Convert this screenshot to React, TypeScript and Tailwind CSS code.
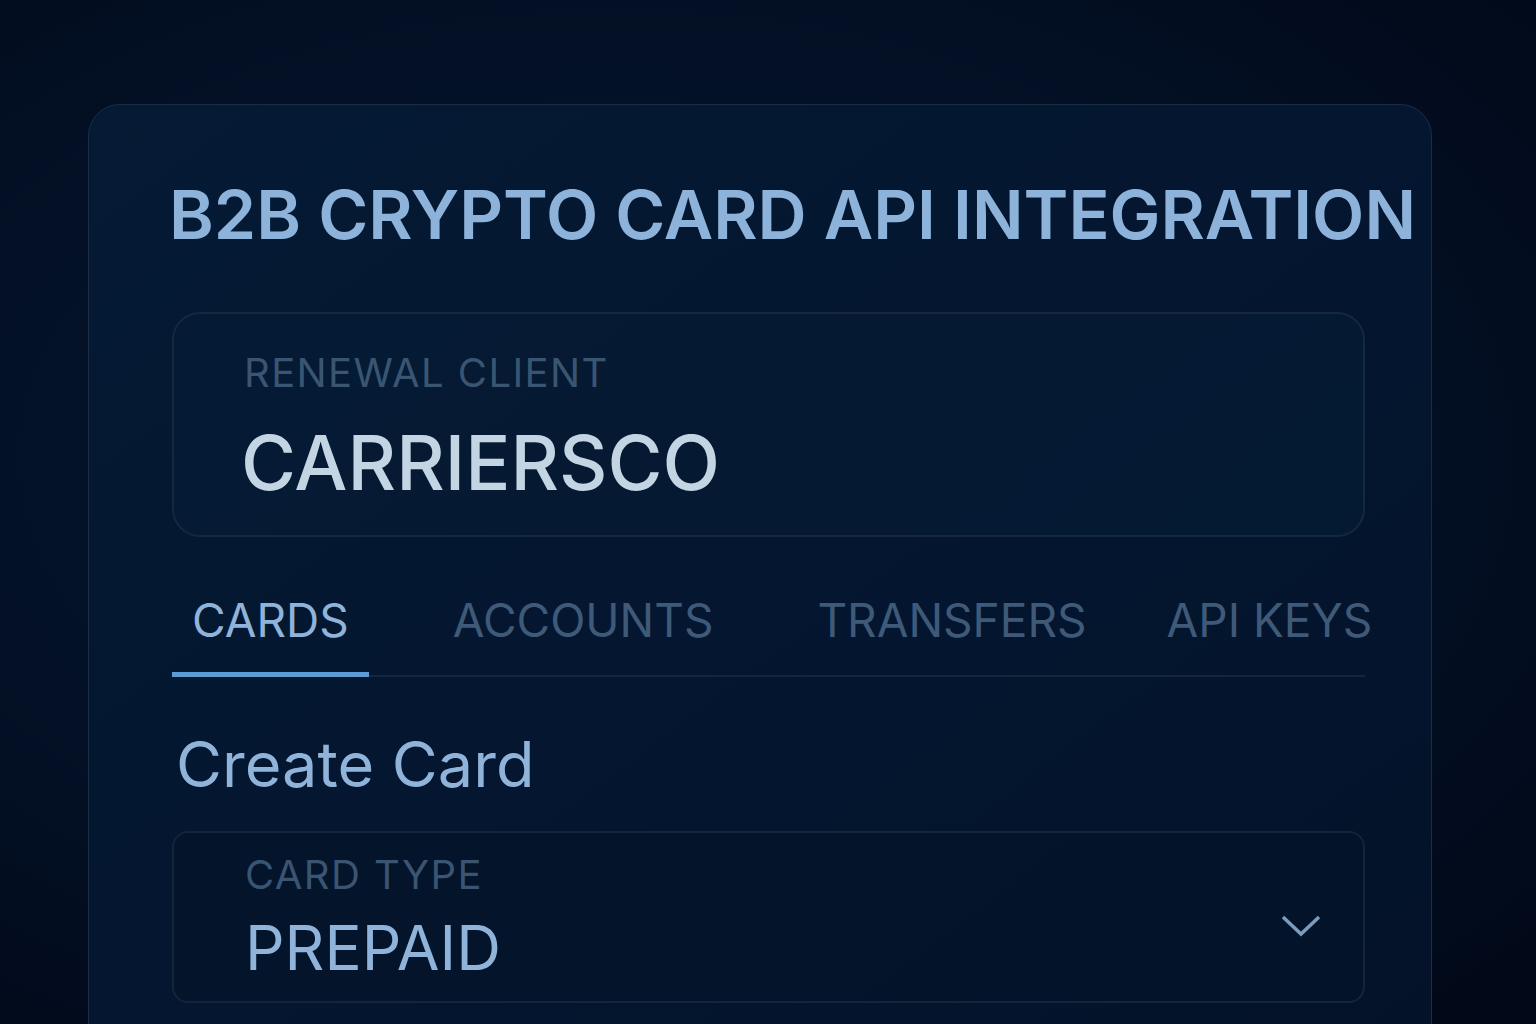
const tabs = [
  { label: 'CARDS', cls: '-mb-[2px] border-b-[5px] border-[#5d9bd6] px-5 pb-[29px] text-[#8fb3d9]' },
  { label: 'ACCOUNTS', cls: 'ml-[64px] px-5 pb-[32px] text-[#3e5a78]' },
  { label: 'TRANSFERS', cls: 'ml-[64px] px-5 pb-[32px] text-[#3e5a78]' },
  { label: 'API KEYS', cls: 'ml-[40px] px-5 pb-[32px] text-[#3e5a78]' },
];

const App = () => {
  return (
    <div
      className="h-[1024px] overflow-hidden bg-[radial-gradient(ellipse_at_40%_45%,#06182f_0%,#031025_55%,#010817_100%)] px-[88px] pt-[104px]"
      style={{ fontFamily: 'Inter, "Noto Sans", sans-serif' }}
    >
      <div className="h-[1000px] w-[1344px] rounded-t-[32px] border border-[#1d2c41] bg-gradient-to-br from-[#051a34] via-[#041630] to-[#031228] pl-[83px] pr-[66px] pt-[75px]">
        <h1 className="-ml-[3px] whitespace-nowrap text-[68px] font-semibold leading-none text-[#8db3da]">
          B2B CRYPTO CARD API INTEGRATION
        </h1>

        <div className="mt-[64px] rounded-[28px] border-2 border-[#16283e] bg-[#061b35]/70 pb-[35px] pl-[70px] pt-[39px]">
          <div className="text-[40px] leading-none tracking-[0.035em] text-[#3a5572]">RENEWAL CLIENT</div>
          <div className="-ml-[3px] mt-[32px] text-[75px] font-medium leading-none text-[#c3d5e3]">CARRIERSCO</div>
        </div>

        <div className="mt-[60px] flex border-b-2 border-[#16263a]">
          {tabs.map((t) => (
            <div key={t.label} className={`whitespace-nowrap text-[46px] leading-none ${t.cls}`}>
              {t.label}
            </div>
          ))}
        </div>

        <h2 className="mt-[56px] pl-[4px] text-[63px] leading-none text-[#8fb3d9]">Create Card</h2>

        <div className="mt-[35px] flex rounded-[16px] border-2 border-[#14253a] bg-[#041429]/70 pb-[22px] pl-[71px] pr-[42px] pt-[22px]">
          <div className="flex-1">
            <div className="text-[40px] leading-none tracking-[0.035em] text-[#3a5572]">CARD TYPE</div>
            <div className="mt-[22px] text-[62px] leading-none text-[#8fb3d9]">PREPAID</div>
          </div>
          <svg width="40" height="24" viewBox="0 0 40 24" fill="none" className="mt-[59px] shrink-0">
            <polyline points="2,3 20,20 38,3" stroke="#7a9cbd" strokeWidth="3.5" />
          </svg>
        </div>
      </div>
    </div>
  );
};

export default App;
